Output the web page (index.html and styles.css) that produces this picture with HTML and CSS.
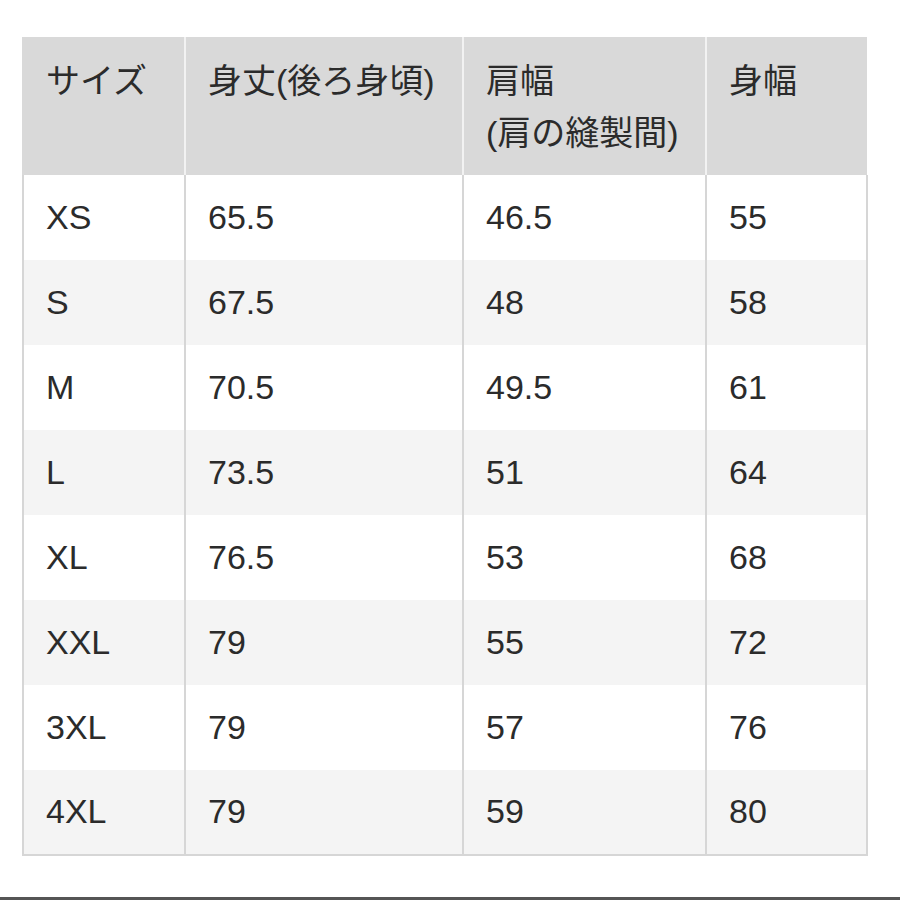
FILE: index.html
```html
<!DOCTYPE html>
<html lang="ja">
<head>
<meta charset="utf-8">
<link rel="stylesheet" href="styles.css">
</head>
<body>
<div class="page">
  <table class="size-table">
    <colgroup>
      <col class="c1"><col class="c2"><col class="c3"><col class="c4">
    </colgroup>
    <thead>
      <tr>
        <th>サイズ</th>
        <th>身丈(後ろ身頃)</th>
        <th>肩幅<br>(肩の縫製間)</th>
        <th>身幅</th>
      </tr>
    </thead>
    <tbody>
      <tr><td>XS</td><td>65.5</td><td>46.5</td><td>55</td></tr>
      <tr><td>S</td><td>67.5</td><td>48</td><td>58</td></tr>
      <tr><td>M</td><td>70.5</td><td>49.5</td><td>61</td></tr>
      <tr><td>L</td><td>73.5</td><td>51</td><td>64</td></tr>
      <tr><td>XL</td><td>76.5</td><td>53</td><td>68</td></tr>
      <tr><td>XXL</td><td>79</td><td>55</td><td>72</td></tr>
      <tr><td>3XL</td><td>79</td><td>57</td><td>76</td></tr>
      <tr><td>4XL</td><td>79</td><td>59</td><td>80</td></tr>
    </tbody>
  </table>
  <div class="spacer"></div>
  <div class="bottom-line"></div>
</div>
</body>
</html>
```

FILE: styles.css
```css
html, body {
  margin: 0;
  padding: 0;
  background: #ffffff;
}
.page {
  width: 900px;
  height: 900px;
  padding-top: 37px;
  box-sizing: border-box;
  display: flex;
  flex-direction: column;
  align-items: flex-start;
}
.size-table {
  margin-left: 22px;
  width: 844px;
  border-collapse: collapse;
  table-layout: fixed;
  font-family: "Liberation Sans", "Noto Sans CJK JP", sans-serif;
  font-size: 34px;
  color: #2b2b2b;
}
.c1 { width: 162px; }
.c2 { width: 278px; }
.c3 { width: 243px; }
.c4 { width: 161px; }
.size-table th {
  background: #d9d9d9;
  font-weight: normal;
  text-align: left;
  vertical-align: top;
  height: 138px;
  box-sizing: border-box;
  padding: 18px 0 0 22px;
  line-height: 52px;
  border-left: 2px solid #f2f2f2;
}
.size-table th:first-child {
  border-left: 2px solid #d9d9d9;
}
.size-table td {
  height: 85px;
  box-sizing: border-box;
  padding: 0 0 2px 22px;
  vertical-align: middle;
  line-height: 40px;
  border-left: 2px solid #d6d6d6;
  border-right: 2px solid #d6d6d6;
}
.size-table tbody tr:nth-child(even) td {
  background: #f4f4f4;
}
.size-table tbody tr:last-child td {
  border-bottom: 2px solid #d6d6d6;
}
.spacer {
  flex: 1;
}
.bottom-line {
  width: 900px;
  height: 3px;
  background: #555555;
}
```
